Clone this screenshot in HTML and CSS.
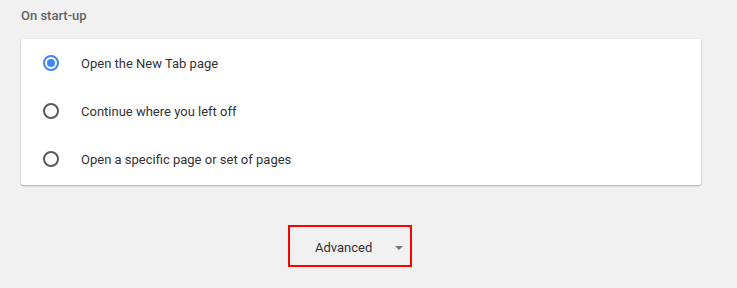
FILE: index.html
```html
<!DOCTYPE html>
<html>
<head>
	<title>On start-up</title>
	<link rel="stylesheet" href="styles.css">
</head>
<body>
	<div class="section">
		<h2 class="heading">On start-up</h2>
		<div class="card">
			<div class="row">
				<span class="radio checked"></span>
				<span class="label">Open the New Tab page</span>
			</div>
			<div class="row">
				<span class="radio"></span>
				<span class="label">Continue where you left off</span>
			</div>
			<div class="row">
				<span class="radio"></span>
				<span class="label">Open a specific page or set of pages</span>
			</div>
		</div>
		<div class="advanced">
			<span class="advanced-text">Advanced</span>
			<span class="arrow"></span>
		</div>
	</div>
</body>
</html>
```

FILE: styles.css
```css
* {
	font-family: Roboto, "Liberation Sans", sans-serif;
	box-sizing: border-box;
}
body {
	margin: 0;
	background-color: #f1f1f1;
}
.section {
	padding-left: 21px;
}
.heading {
	margin: 8px 0 0 0;
	font-size: 13px;
	font-weight: 500;
	line-height: 16px;
	color: #646464;
}
.card {
	width: 680px;
	margin-top: 15px;
	padding-bottom: 2px;
	background-color: white;
	border-radius: 2px;
	box-shadow: 0 1px 2px rgba(0, 0, 0, 0.3), 0 0 1px rgba(0, 0, 0, 0.05);
}
.row {
	display: flex;
	align-items: center;
	height: 48px;
	padding-left: 22px;
}
.radio {
	width: 16px;
	height: 16px;
	border: 2px solid #5a5a5a;
	border-radius: 50%;
	display: flex;
	align-items: center;
	justify-content: center;
}
.radio.checked {
	border-color: #4285f4;
}
.radio.checked::after {
	content: "";
	width: 8px;
	height: 8px;
	border-radius: 50%;
	background-color: #4285f4;
}
.label {
	margin-left: 22px;
	font-size: 13px;
	color: #333;
}
.advanced {
	display: flex;
	align-items: center;
	width: 124px;
	height: 42px;
	margin: 40px 0 0 267px;
	padding: 3px 0 0 25px;
	border: 2px solid #ff0000;
}
.advanced-text {
	font-size: 13px;
	color: #333;
}
.arrow {
	margin-left: 23px;
	width: 0;
	height: 0;
	border-left: 4px solid transparent;
	border-right: 4px solid transparent;
	border-top: 4px solid #777;
}
```
